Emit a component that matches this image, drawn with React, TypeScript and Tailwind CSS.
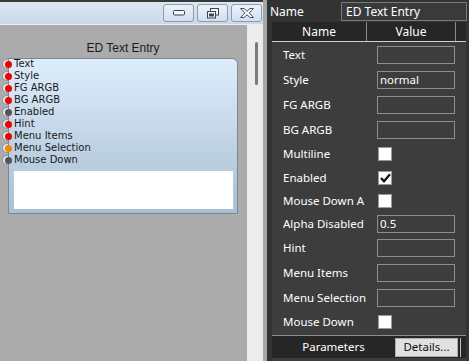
import React from "react";

type Port = { label: string; color: string };

const ports: Port[] = [
  { label: "Text", color: "bg-[#f00000]" },
  { label: "Style", color: "bg-[#f00000]" },
  { label: "FG ARGB", color: "bg-[#f00000]" },
  { label: "BG ARGB", color: "bg-[#f00000]" },
  { label: "Enabled", color: "bg-[#555555]" },
  { label: "Hint", color: "bg-[#f00000]" },
  { label: "Menu Items", color: "bg-[#f00000]" },
  { label: "Menu Selection", color: "bg-[#f08a00]" },
  { label: "Mouse Down", color: "bg-[#555555]" },
];

type Prop = {
  label: string;
  kind: "text" | "check";
  value?: string;
  checked?: boolean;
  h: string;
};

const props: Prop[] = [
  { label: "Text", kind: "text", h: "h-[25px]" },
  { label: "Style", kind: "text", value: "normal", h: "h-[25px]" },
  { label: "FG ARGB", kind: "text", h: "h-[25px]" },
  { label: "BG ARGB", kind: "text", h: "h-[25px]" },
  { label: "Multiline", kind: "check", h: "h-[24px]" },
  { label: "Enabled", kind: "check", checked: true, h: "h-[23px]" },
  { label: "Mouse Down A", kind: "check", h: "h-[23px]" },
  { label: "Alpha Disabled", kind: "text", value: "0.5", h: "h-[24px]" },
  { label: "Hint", kind: "text", h: "h-[24px]" },
  { label: "Menu Items", kind: "text", h: "h-[25px]" },
  { label: "Menu Selection", kind: "text", h: "h-[25px]" },
  { label: "Mouse Down", kind: "check", h: "h-[23px]" },
];

function CaptionButton({ children }: { children: React.ReactNode }) {
  return (
    <div className="flex h-[18px] w-[31px] items-center justify-center rounded-[3px] border border-[#8b9bb0] bg-gradient-to-b from-[#edf2f9] to-[#d3deec]">
      {children}
    </div>
  );
}

function TitleBar() {
  return (
    <div className="flex h-[25px] flex-col">
      <div className="h-[2px] bg-[#3a3a3a]" />
      <div className="flex flex-1 items-start justify-end gap-[3px] border-b border-[#e6eef7] bg-gradient-to-b from-[#dce7f4] to-[#c9d8ea] pr-[1px] pt-[2px]">
        <CaptionButton>
          <svg width="12" height="6" viewBox="0 0 12 6">
            <rect x="0.5" y="0.5" width="11" height="4.5" rx="1" fill="#f4f6f9" stroke="#3c4350" />
          </svg>
        </CaptionButton>
        <CaptionButton>
          <svg width="12" height="11" viewBox="0 0 12 11">
            <rect x="3.5" y="0.5" width="8" height="6.5" fill="#f4f6f9" stroke="#3c4350" />
            <rect x="0.5" y="3.5" width="8" height="6.5" fill="#f4f6f9" stroke="#3c4350" />
            <rect x="2" y="5.5" width="5" height="3" fill="#3c4350" />
          </svg>
        </CaptionButton>
        <CaptionButton>
          <svg width="14" height="10" viewBox="0 0 14 10">
            <path
              d="M0.5 0.5 H4 L7 3.2 L10 0.5 H13.5 L9.2 5 L13.5 9.5 H10 L7 6.8 L4 9.5 H0.5 L4.8 5 Z"
              fill="#f4f6f9"
              stroke="#4a5260"
              strokeLinejoin="round"
            />
          </svg>
        </CaptionButton>
      </div>
    </div>
  );
}

function Node() {
  return (
    <div className="flex flex-col pl-[8px] pt-[14px]">
      <div className="w-[230px] text-center font-['Liberation_Sans',sans-serif] text-[12px] leading-[19px] text-[#1c1c1c]">
        ED Text Entry
      </div>
      <div className="flex w-[230px] flex-col rounded-tr-[6px] border border-[#7d8793] bg-gradient-to-b from-[#deedfc] to-[#a9bfd3]">
        <div className="-mt-px flex flex-col">
          {ports.map((p) => (
            <div
              key={p.label}
              className="relative flex h-[12px] items-center pl-[5px] font-['DejaVu_Sans',sans-serif] text-[10px] leading-none text-[#1a1a1a]"
            >
              <span className="absolute left-[-7px] top-[1px] h-[10px] w-[6px] rounded-l-full border border-r-0 border-[#8d96a1] bg-[#dbe7f3]" />
              <span className={`absolute left-[-4.5px] top-[2.5px] h-[7px] w-[7px] rounded-full ${p.color}`} />
              {p.label}
            </div>
          ))}
        </div>
        <div className="mb-[4px] ml-[5px] mr-[4px] mt-[5px] h-[38px] bg-white" />
      </div>
    </div>
  );
}

function Canvas() {
  return (
    <div className="flex flex-1">
      <div className="flex-1 bg-[#ababab]">
        <Node />
      </div>
      <div className="flex w-[16px] justify-center bg-[#ececec] pl-[2px] pt-[17px]">
        <div className="h-[43px] w-[3px] rounded-full bg-[#7b7b7b]" />
      </div>
    </div>
  );
}

function PropRow({ p }: { p: Prop }) {
  return (
    <div className={`flex items-center ${p.h}`}>
      <div className="w-[105px] pl-[11px] text-white">{p.label}</div>
      {p.kind === "text" ? (
        <div className="flex h-[18px] w-[78px] items-center border border-[#8e8e8e] pl-[2px] text-white">
          {p.value}
        </div>
      ) : (
        <div className="ml-[1px] flex h-[14px] w-[14px] items-center justify-center border border-[#9a9a9a] bg-white">
          {p.checked && (
            <svg width="11" height="10" viewBox="0 0 11 10">
              <path d="M1 5 L4 8.3 L10 1.2" fill="none" stroke="#111" strokeWidth="2.2" />
            </svg>
          )}
        </div>
      )}
    </div>
  );
}

function Inspector() {
  return (
    <div className="flex w-[202px] flex-col bg-[#333333] font-['Noto_Sans',sans-serif] text-[11.5px] leading-none">
      <div className="flex h-[22px] items-center pl-[3px] pt-[1px]">
        <div className="w-[71px] text-[12px] text-white">Name</div>
        <div className="flex h-[19px] flex-1 items-center border border-[#7a7a7a] bg-[#3a3a3a] pl-[4px] text-[12px] text-white">
          ED Text Entry
        </div>
        <div className="w-[2px]" />
      </div>
      <div className="ml-[5px] mr-[3px] flex flex-1 flex-col bg-[#3d3d3d]">
        <div className="flex h-[20px] border-b border-[#cfcfcf] bg-[#262626] text-[12px] text-white">
          <div className="flex w-[95px] items-center justify-center border-r border-[#8a8a8a]">Name</div>
          <div className="flex w-[89px] items-center justify-center border-r border-[#8a8a8a]">Value</div>
          <div className="flex-1" />
        </div>
        <div className="flex flex-col">
          {props.map((p) => (
            <PropRow key={p.label} p={p} />
          ))}
        </div>
        <div className="mt-[2px] flex h-[23px] items-center border-t border-[#8f8f8f] bg-[#262626] pr-[4px]">
          <div className="w-[123px] text-center text-white">Parameters</div>
          <div className="flex h-[19px] w-[63px] items-center justify-center border border-[#adadad] bg-[#e1e1e1] text-[#111]">
            Details...
          </div>
          <div className="ml-[2px] h-[19px] w-px bg-[#bdbdbd]" />
        </div>
        <div className="flex-1" />
      </div>
    </div>
  );
}

export default function App() {
  return (
    <div className="flex h-[361px] w-[469px] overflow-hidden bg-[#ababab]">
      <div className="flex w-[263px] flex-col">
        <TitleBar />
        <Canvas />
      </div>
      <div className="w-[4px] bg-[#a6a6a6]" />
      <Inspector />
    </div>
  );
}
